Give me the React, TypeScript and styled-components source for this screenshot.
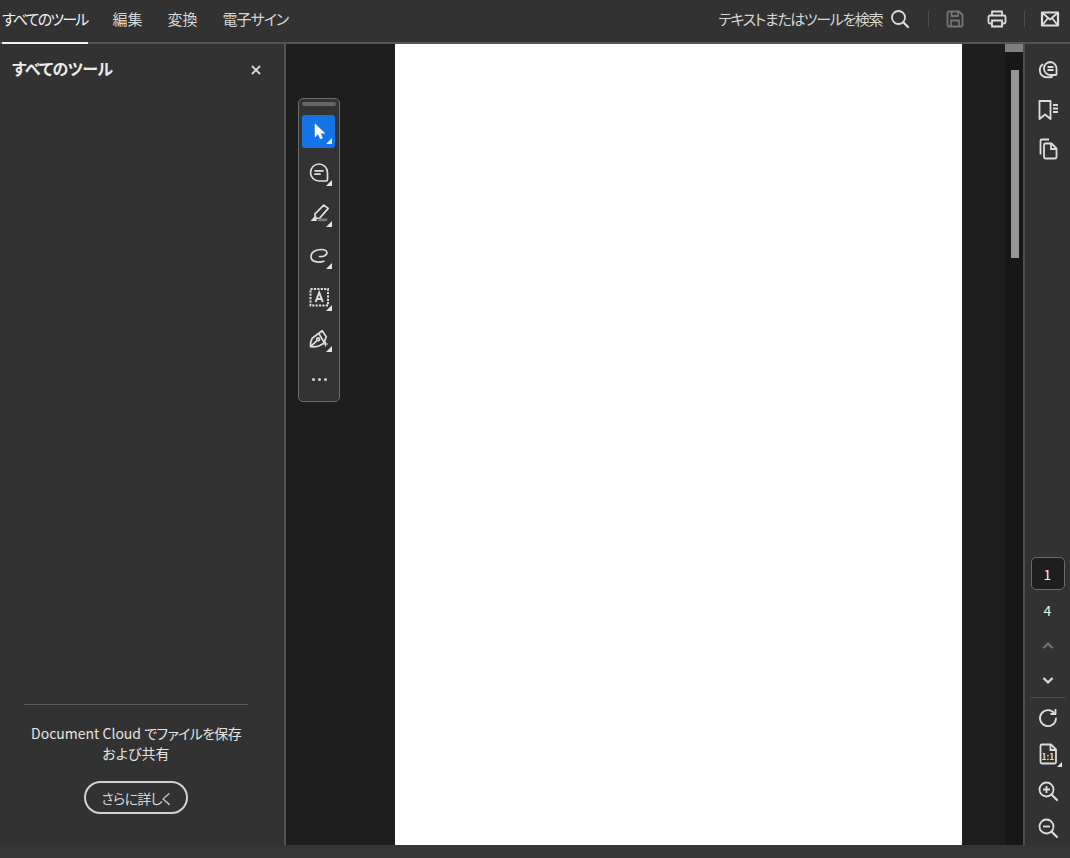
import React from 'react';
import styled, { createGlobalStyle } from 'styled-components';

const GlobalStyle = createGlobalStyle`
  html, body {
    margin: 0;
    padding: 0;
    background: #333333;
  }
  * {
    box-sizing: border-box;
  }
`;

const fontStack = `"Noto Sans CJK JP", "Noto Sans", sans-serif`;

const AppFrame = styled.div`
  width: 1070px;
  height: 858px;
  display: flex;
  flex-direction: column;
  overflow: hidden;
  background: #333333;
  color: #e8e8e8;
  font-family: ${fontStack};
  font-feature-settings: "palt";
`;

const TopBar = styled.header`
  height: 44px;
  flex: none;
  display: flex;
  justify-content: space-between;
  align-items: stretch;
  background: #323232;
  border-bottom: 2px solid #545454;
`;

const Tabs = styled.nav`
  display: flex;
  gap: 25px;
  padding-left: 2px;
`;

const Tab = styled.div<{ $active?: boolean; $tracking?: number }>`
  height: 44px;
  line-height: 37px;
  font-size: 15px;
  letter-spacing: ${({ $tracking }) => $tracking ?? 0}px;
  color: ${({ $active }) => ($active ? '#f0f0f0' : '#d6d6d6')};
  border-bottom: 2px solid ${({ $active }) => ($active ? '#f0f0f0' : 'transparent')};
`;

const TopActions = styled.div`
  display: flex;
  align-items: center;
  padding-right: 10px;
  padding-bottom: 5px;
`;

const SearchLabel = styled.span`
  font-size: 15px;
  letter-spacing: -1.400px;
  color: #d6d6d6;
  margin-right: 8px;
`;

const ActionIcon = styled.svg<{ $dim?: boolean; $gap?: number }>`
  width: 20px;
  height: 20px;
  display: block;
  fill: none;
  stroke: ${({ $dim }) => ($dim ? '#747474' : '#dcdcdc')};
  stroke-width: 1.8;
  margin-left: ${({ $gap }) => $gap ?? 0}px;
`;

const Divider = styled.div<{ $left: number; $right: number }>`
  width: 1px;
  height: 16px;
  background: #4e4e4e;
  margin-left: ${({ $left }) => $left}px;
  margin-right: ${({ $right }) => $right}px;
`;

const Body = styled.div`
  flex: 1;
  min-height: 0;
  display: flex;
`;

const LeftPanel = styled.aside`
  width: 286px;
  flex: none;
  display: flex;
  flex-direction: column;
  background: #323232;
  border-right: 2px solid #545454;
  overflow: hidden;
`;

const PanelHeader = styled.div`
  display: flex;
  justify-content: space-between;
  align-items: center;
  padding: 12px 23px 0 12px;
`;

const PanelTitle = styled.h2`
  margin: 0;
  font-size: 16px;
  line-height: 24px;
  font-weight: 700;
  letter-spacing: -0.600px;
  color: #ececec;
`;

const CloseIcon = styled.svg`
  width: 10px;
  height: 10px;
  margin-top: 4px;
  fill: none;
  stroke: #dcdcdc;
  stroke-width: 1.8;
`;

const PromoBox = styled.div`
  margin: auto 36px 0 24px;
  border-top: 1px solid #5c5c5c;
  padding-top: 18px;
  height: 141px;
  display: flex;
  flex-direction: column;
  align-items: center;
`;

const PromoText = styled.p`
  margin: 0;
  font-size: 14px;
  line-height: 20px;
  text-align: center;
  color: #e4e4e4;
  white-space: nowrap;
`;

const PromoTight = styled.span`
  letter-spacing: -0.700px;
`;

const PromoButton = styled.button`
  margin-top: 18px;
  width: 104px;
  height: 33px;
  border: 2px solid #d2d2d2;
  border-radius: 17px;
  background: transparent;
  color: #d6d6d6;
  font-family: inherit;
  font-feature-settings: inherit;
  font-size: 14px;
  letter-spacing: -0.700px;
  line-height: 1;
  padding: 0;
`;

const Viewer = styled.main`
  position: relative;
  flex: 1;
  min-width: 0;
  display: flex;
  background: #1e1e1e;
`;

const PageGutter = styled.div`
  flex: 1;
  padding-left: 109px;
`;

const Page = styled.div`
  width: 567px;
  height: 100%;
  background: #ffffff;
`;

const ScrollTrack = styled.div`
  width: 18px;
  flex: none;
  display: flex;
  flex-direction: column;
  align-items: center;
  background: #171717;
`;

const ScrollCap = styled.div`
  width: 100%;
  height: 8px;
  background: #7f7f7f;
`;

const ScrollThumb = styled.div`
  width: 8px;
  height: 188px;
  margin: 18px 0 0 1px;
  background: #969696;
`;

const FloatingTools = styled.div`
  position: absolute;
  left: 12px;
  top: 54px;
  width: 42px;
  height: 304px;
  display: flex;
  flex-direction: column;
  align-items: center;
  background: #333333;
  border: 1px solid #6b6b6b;
  border-radius: 5px;
`;

const GripBar = styled.div`
  width: 34px;
  height: 4px;
  margin-top: 3px;
  margin-bottom: 9px;
  border-radius: 2px;
  background: #656565;
`;

const ToolList = styled.div`
  display: flex;
  flex-direction: column;
  gap: 8.700px;
  margin-right: 1px;
`;

const ToolButton = styled.div<{ $active?: boolean }>`
  position: relative;
  width: 33px;
  height: 33px;
  display: flex;
  align-items: center;
  justify-content: center;
  border-radius: 3px;
  background: ${({ $active }) => ($active ? '#1473e6' : 'transparent')};
`;

const Corner = styled.span`
  position: absolute;
  right: 3px;
  bottom: 4px;
  width: 0;
  height: 0;
  border-left: 6px solid transparent;
  border-bottom: 6px solid #e4e4e4;
`;

const ToolIcon = styled.svg`
  width: 22px;
  height: 22px;
  display: block;
  fill: none;
  stroke: #dedede;
  stroke-width: 1.7;
`;

const MoreDots = styled.div`
  display: flex;
  gap: 3px;
  margin-top: 6px;
  height: 34px;
  align-items: center;
`;

const Dot = styled.span`
  width: 3px;
  height: 3px;
  border-radius: 50%;
  background: #d4d4d4;
`;

const RightRail = styled.aside`
  width: 47px;
  flex: none;
  display: flex;
  flex-direction: column;
  align-items: center;
  background: #323232;
  border-left: 2px solid #4e4e4e;
  overflow: hidden;
`;

const RailTop = styled.div`
  display: flex;
  flex-direction: column;
  gap: 17.500px;
  padding-top: 15px;
  flex: 1;
`;

const RailIcon = styled.svg<{ $dim?: boolean }>`
  width: 22px;
  height: 22px;
  display: block;
  fill: none;
  stroke: ${({ $dim }) => ($dim ? '#737373' : '#dcdcdc')};
  stroke-width: 1.8;
`;

const FitLabel = styled.text`
  font-family: ${fontStack};
  font-size: 8.500px;
  font-weight: 700;
  fill: #dcdcdc;
  stroke: none;
`;

const PageBox = styled.div`
  width: 34px;
  height: 33px;
  display: flex;
  align-items: center;
  justify-content: center;
  border: 1px solid #6a6a6a;
  border-radius: 5px;
  background: #1e1e1e;
  font-size: 14px;
  color: #ececec;
`;

const PageTotal = styled.div`
  height: 39px;
  display: flex;
  align-items: center;
  font-size: 14px;
  color: #ececec;
`;

const RailSlot = styled.div<{ $height: number }>`
  position: relative;
  width: 36px;
  height: ${({ $height }) => $height}px;
  display: flex;
  align-items: center;
  justify-content: center;
`;

const RailDivider = styled.div`
  width: 34px;
  height: 1px;
  margin: 0 0 1px;
  background: #4f4f4f;
`;

const RailCorner = styled(Corner)`
  right: 4px;
  bottom: 4px;
  border-left-width: 5px;
  border-bottom-width: 5px;
`;

const RailBottom = styled.div`
  display: flex;
  flex-direction: column;
  align-items: center;
`;

const StatusStrip = styled.footer`
  height: 13px;
  flex: none;
  background: #363636;
`;

const App: React.FC = () => (
  <AppFrame>
    <GlobalStyle />
    <TopBar>
      <Tabs>
        <Tab $active $tracking={-1.8}>すべてのツール</Tab>
        <Tab>編集</Tab>
        <Tab>変換</Tab>
        <Tab $tracking={-1}>電子サイン</Tab>
      </Tabs>
      <TopActions>
        <SearchLabel>テキストまたはツールを検索</SearchLabel>
        <ActionIcon viewBox="0 0 20 20">
          <circle cx="8.500" cy="8.500" r="6.500" />
          <path d="M13.300 13.300 18 18" strokeLinecap="round" strokeWidth="2.200" />
        </ActionIcon>
        <Divider $left={18} $right={16} />
        <ActionIcon $dim viewBox="0 0 20 20">
          <path d="M4 2.500h10l3.500 3.500v10a1.500 1.500 0 0 1-1.500 1.500H4A1.500 1.500 0 0 1 2.500 16V4A1.500 1.500 0 0 1 4 2.500z" strokeLinejoin="round" />
          <path d="M6.500 2.500v4.500h6.500V2.500M6 17.500v-6h8v6" />
        </ActionIcon>
        <ActionIcon $gap={22} viewBox="0 0 20 20">
          <path d="M5 6V2.500h10V6" strokeLinejoin="round" />
          <path d="M5 14.500H3a1.500 1.500 0 0 1-1.500-1.500V8A1.500 1.500 0 0 1 3 6.500h14A1.500 1.500 0 0 1 18.500 8v5a1.500 1.500 0 0 1-1.500 1.500h-2" />
          <path d="M5 11.500h10v6H5z" />
        </ActionIcon>
        <Divider $left={17} $right={15} />
        <ActionIcon viewBox="0 0 20 20">
          <path d="M2 3.500h16v13H2z" strokeWidth="2.200" strokeLinejoin="round" />
          <path d="m2.500 4 7.500 6.500L17.500 4M2.500 16 8 9M17.500 16 12 9" />
        </ActionIcon>
      </TopActions>
    </TopBar>

    <Body>
      <LeftPanel>
        <PanelHeader>
          <PanelTitle>すべてのツール</PanelTitle>
          <CloseIcon viewBox="0 0 10 10">
            <path d="m1 1 8 8M9 1 1 9" />
          </CloseIcon>
        </PanelHeader>
        <PromoBox>
          <PromoText>
            Document Cloud <PromoTight>でファイルを保存</PromoTight>
            <br />
            および共有
          </PromoText>
          <PromoButton>さらに詳しく</PromoButton>
        </PromoBox>
      </LeftPanel>

      <Viewer>
        <PageGutter>
          <Page />
        </PageGutter>
        <ScrollTrack>
          <ScrollCap />
          <ScrollThumb />
        </ScrollTrack>
        <FloatingTools>
          <GripBar />
          <ToolList>
            <ToolButton $active>
              <ToolIcon viewBox="0 0 22 22">
                <path d="M7 2.800V16l3-3 2.500 5 2-1-2-4.700h4.300z" fill="#ffffff" stroke="#ffffff" strokeWidth="0.5" strokeLinejoin="round" />
              </ToolIcon>
              <Corner />
            </ToolButton>
            <ToolButton>
              <ToolIcon viewBox="0 0 22 22">
                <path d="M11 2a8.500 8.500 0 1 0 0 17h7a1.500 1.500 0 0 0 1.500-1.500v-7A8.500 8.500 0 0 0 11 2z" strokeLinejoin="round" />
                <path d="M7 8.800h8M7 12.200h5" strokeLinecap="round" />
              </ToolIcon>
              <Corner />
            </ToolButton>
            <ToolButton>
              <ToolIcon viewBox="0 0 22 22">
                <path d="m6.800 10.100 9-9 4.400 3.300-8.700 10-3.700-.3z" strokeLinejoin="round" />
                <path d="M2.500 17.100 6.800 12.100l2.400 5z" fill="#dedede" stroke="none" />
                <path d="M10.200 15.800h9" stroke="#7a7a7a" strokeWidth="2.700" />
              </ToolIcon>
              <Corner />
            </ToolButton>
            <ToolButton>
              <ToolIcon viewBox="0 0 22 22">
                <path d="M15.800 15.200C11 16.800 3 16.500 3 10.500 3 6 8 3.500 13 3.500c4 0 7 1.500 5.500 4.500-1 2-4.500 3-7 2.500" strokeLinecap="round" />
              </ToolIcon>
              <Corner />
            </ToolButton>
            <ToolButton>
              <ToolIcon viewBox="0 0 22 22">
                <path d="M2.500 2h17.500v16.500H2.500z" strokeWidth="2" strokeDasharray="2.200 1.200" />
                <path d="m7.600 15 3.600-9.500 3.600 9.500M8.700 12h5" strokeWidth="2" />
              </ToolIcon>
              <Corner />
            </ToolButton>
            <ToolButton>
              <ToolIcon viewBox="0 0 22 22">
                <path d="M2.500 17.700c-.300-3 .300-6.200 1.700-8.400l6.600-5 3.400-2.600 4 6-2.400 6.600-5 2.700c-2.500.800-5.500 1-8.300.7z" strokeLinejoin="round" />
                <path d="m10.800 4.300 5.400 9.400M2.500 17.700l6.700-6.400" />
                <circle cx="10.200" cy="10.300" r="1.400" />
                <path d="M17.500 12.500v5M15 15h5" strokeWidth="1.200" />
              </ToolIcon>
              <Corner />
            </ToolButton>
          </ToolList>
          <MoreDots>
            <Dot />
            <Dot />
            <Dot />
          </MoreDots>
        </FloatingTools>
      </Viewer>

      <RightRail>
        <RailTop>
          <RailIcon viewBox="0 0 22 22">
            <path d="M13.500 3a6.500 6.500 0 1 0 0 13H19a.500.500 0 0 0 .500-.500V9.500A6.500 6.500 0 0 0 13.500 3z" strokeLinejoin="round" />
            <path d="M10.500 8h6M10.500 11h6" />
            <path d="M5.500 5.500C2 8 2 14 5 16.500c2 1.800 6 2.300 10 1.500" strokeLinecap="round" />
          </RailIcon>
          <RailIcon viewBox="0 0 22 22">
            <path d="M2.500 2h11v18l-5.500-4.500L2.500 20z" strokeLinejoin="round" />
            <path d="M16 6h5M16 9.500h5M16 13h5" />
          </RailIcon>
          <RailIcon viewBox="0 0 22 22">
            <path d="M8.500 5.500h6l5 5V19a1.500 1.500 0 0 1-1.500 1.500H8.500A1.500 1.500 0 0 1 7 19V7a1.500 1.500 0 0 1 1.500-1.500z" strokeLinejoin="round" />
            <path d="M14 5.500v5.500h5.500" />
            <path d="M3.500 16.500V3a1.500 1.500 0 0 1 1.500-1.500h7" />
          </RailIcon>
        </RailTop>
        <RailBottom>
          <PageBox>1</PageBox>
          <PageTotal>4</PageTotal>
          <RailSlot $height={34}>
            <RailIcon $dim viewBox="0 0 22 22">
              <path d="m6.500 13 4.500-4.500 4.500 4.500" strokeWidth="2.200" />
            </RailIcon>
          </RailSlot>
          <RailSlot $height={34}>
            <RailIcon viewBox="0 0 22 22">
              <path d="m6.500 9 4.500 4.500L15.500 9" strokeWidth="2.200" />
            </RailIcon>
          </RailSlot>
          <RailDivider />
          <RailSlot $height={37}>
            <RailIcon viewBox="0 0 22 22">
              <path d="M17.500 6.500A8 8 0 1 0 19 11.500" strokeLinecap="round" />
              <path d="M18.500 2V7H13.500" strokeLinejoin="round" />
            </RailIcon>
          </RailSlot>
          <RailSlot $height={35}>
            <RailIcon viewBox="0 0 22 22">
              <path d="M5 1.500h9l5 5V19a1.500 1.500 0 0 1-1.500 1.500H5A1.500 1.500 0 0 1 3.500 19V3A1.500 1.500 0 0 1 5 1.500z" strokeLinejoin="round" />
              <path d="M13.500 1.500v5.500H19" />
              <FitLabel x="11" y="16.500" textAnchor="middle">1:1</FitLabel>
            </RailIcon>
            <RailCorner />
          </RailSlot>
          <RailSlot $height={39}>
            <RailIcon viewBox="0 0 22 22">
              <circle cx="9.500" cy="9.500" r="7" />
              <path d="m14.500 14.500 5.500 5.500" strokeLinecap="round" strokeWidth="2.200" />
              <path d="M6 9.500h7M9.500 6v7" />
            </RailIcon>
          </RailSlot>
          <RailSlot $height={35}>
            <RailIcon viewBox="0 0 22 22">
              <circle cx="9.500" cy="9.500" r="7" />
              <path d="m14.500 14.500 5.500 5.500" strokeLinecap="round" strokeWidth="2.200" />
              <path d="M6 9.500h7" />
            </RailIcon>
          </RailSlot>
        </RailBottom>
      </RightRail>
    </Body>
    <StatusStrip />
  </AppFrame>
);

export default App;
